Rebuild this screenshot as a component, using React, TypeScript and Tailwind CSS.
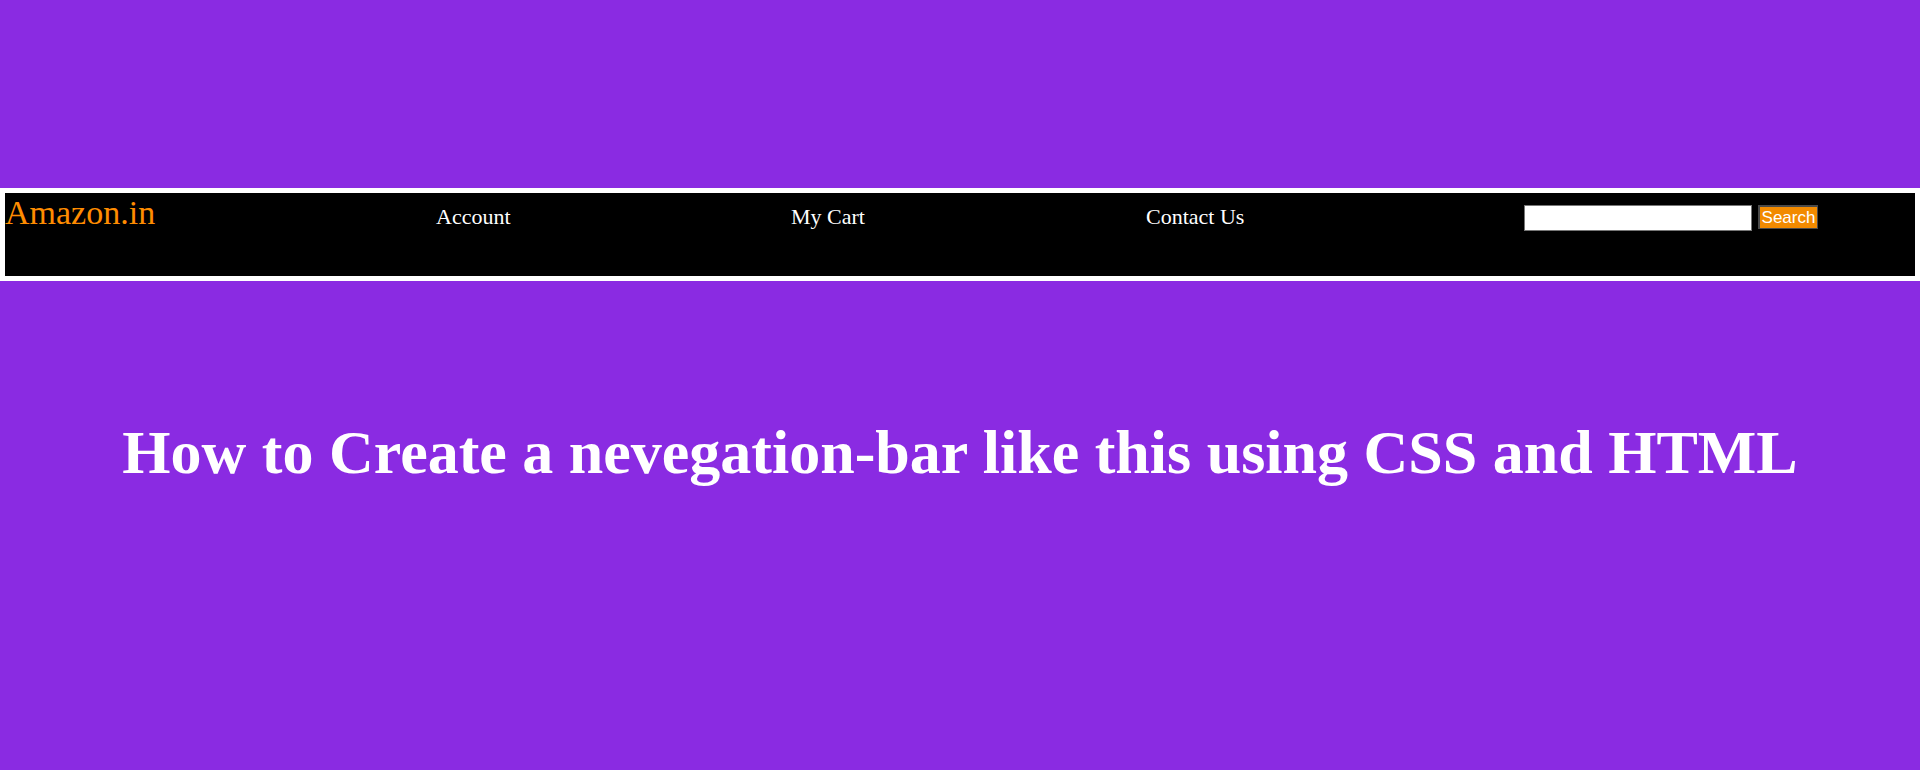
export default function App() {
  return (
    <div className="min-h-[770px] w-full bg-[#8a2be2] pt-[188px] font-['Liberation_Serif',serif] overflow-hidden">
      <nav className="flex h-[93px] items-start border-[5px] border-white bg-black">
        <div className="w-[431px] shrink-0 text-[34px] leading-[39px] text-[#ff8c00]">Amazon.in</div>
        <a className="mt-[11px] w-[355px] shrink-0 text-[22px] leading-[25px] text-white">Account</a>
        <a className="mt-[11px] w-[355px] shrink-0 text-[22px] leading-[25px] text-white">My Cart</a>
        <a className="mt-[11px] w-[378px] shrink-0 text-[22px] leading-[25px] text-white">Contact Us</a>
        <div className="mt-[12px] flex items-start gap-[6px]">
          <input
            type="text"
            className="h-[26px] w-[228px] border border-[#767676] bg-white px-1 font-['Liberation_Sans',sans-serif] text-[15px] outline-none"
          />
          <button className="h-[24px] w-[60px] border-t-2 border-l-2 border-r border-b border-[#4a4a4a] bg-[#f28a00] p-0 font-['Liberation_Sans',sans-serif] text-[17px] leading-[20px] text-white">
            Search
          </button>
        </div>
      </nav>
      <h1 className="mt-[136px] text-center text-[62px] font-bold leading-[71px] text-white">
        How to Create a nevegation-bar like this using CSS and HTML
      </h1>
    </div>
  );
}
